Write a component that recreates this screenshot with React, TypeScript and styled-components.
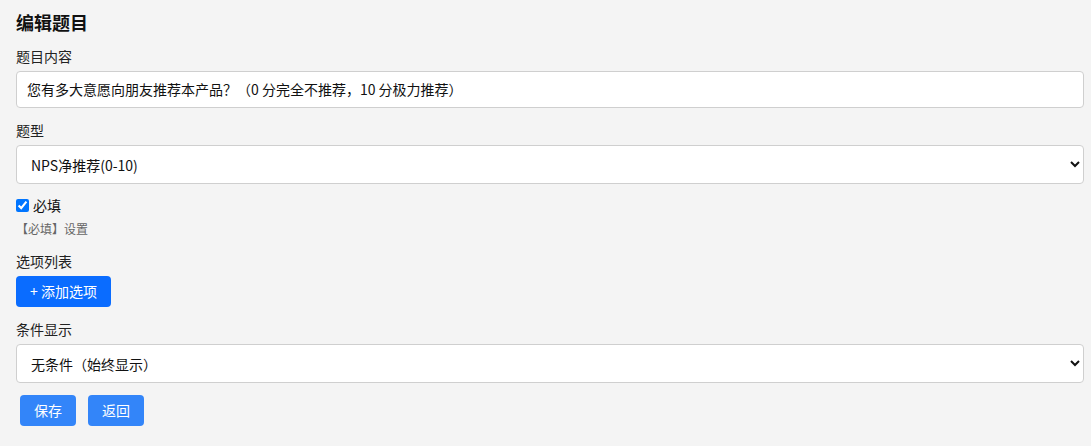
import React from "react";
import styled, { createGlobalStyle } from "styled-components";

const Global = createGlobalStyle`
  html, body { margin: 0; padding: 0; background: #f4f4f4; }
  body {
    font-family: "Noto Sans CJK SC", "Noto Sans", sans-serif;
    font-size: 14px;
    color: #111;
  }
  * { box-sizing: border-box; }
`;

const Page = styled.div`
  padding: 10px 7px 0 16px;
`;

const Title = styled.h2`
  margin: 0 0 12px;
  font-size: 18px;
  line-height: 24px;
  font-weight: 700;
  color: #111;
`;

const Field = styled.div`
  margin-bottom: 12px;
`;

const Label = styled.label`
  display: block;
  font-size: 14px;
  line-height: 20px;
  margin-bottom: 5px;
  color: #222;
`;

const TextInput = styled.input`
  display: block;
  width: 100%;
  font: inherit;
  font-size: 14px;
  line-height: 19px;
  padding: 8px 10px;
  border: 1px solid #cfcfcf;
  border-radius: 4px;
  background: #fff;
  color: #111;
  outline: none;
`;

const Select = styled.select`
  display: block;
  width: 100%;
  font: inherit;
  font-size: 14px;
  line-height: 19px;
  height: 39px;
  padding: 0 10px;
  border: 1px solid #cfcfcf;
  border-radius: 4px;
  background: #fff;
  color: #111;
  outline: none;
`;

const CheckRow = styled.label`
  display: flex;
  align-items: center;
  gap: 4px;
  font-size: 14px;
  line-height: 20px;
  margin-top: -1px;
  margin-bottom: 5px;
  color: #111;
`;

const Check = styled.input`
  margin: 0;
  width: 13px;
  height: 13px;
`;

const Hint = styled.div`
  font-size: 12px;
  line-height: 18px;
  color: #666;
  margin-bottom: 13px;
`;

const Button = styled.button<{ $tone?: "primary" | "soft" }>`
  font: inherit;
  font-size: 14px;
  line-height: 19px;
  padding: 6px 14px;
  border: none;
  border-radius: 4px;
  color: #fff;
  background: ${(p) => (p.$tone === "soft" ? "#3385f9" : "#0a6cff")};
  cursor: pointer;
`;

const Actions = styled.div`
  display: flex;
  gap: 12px;
  padding-left: 4px;
`;

export default function App() {
  return (
    <>
      <Global />
      <Page>
        <Title>编辑题目</Title>
        <Field>
          <Label>题目内容</Label>
          <TextInput
            defaultValue="您有多大意愿向朋友推荐本产品？（0 分完全不推荐，10 分极力推荐）"
          />
        </Field>
        <Field>
          <Label>题型</Label>
          <Select defaultValue="nps">
            <option value="nps">NPS净推荐(0-10)</option>
          </Select>
        </Field>
        <CheckRow>
          <Check type="checkbox" defaultChecked />
          必填
        </CheckRow>
        <Hint>【必填】设置</Hint>
        <Field>
          <Label>选项列表</Label>
          <Button $tone="primary">+ 添加选项</Button>
        </Field>
        <Field>
          <Label>条件显示</Label>
          <Select defaultValue="none">
            <option value="none">无条件（始终显示）</option>
          </Select>
        </Field>
        <Actions>
          <Button $tone="soft">保存</Button>
          <Button $tone="soft">返回</Button>
        </Actions>
      </Page>
    </>
  );
}
